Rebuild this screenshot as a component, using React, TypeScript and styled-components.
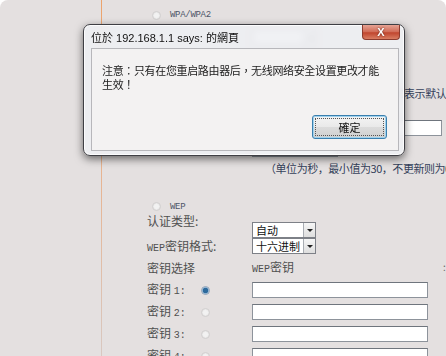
import React from 'react';
import styled, { createGlobalStyle } from 'styled-components';

const GlobalStyle = createGlobalStyle`
  body {
    margin: 0;
    background: #ffffff;
  }
`;

const Screen = styled.div`
  position: relative;
  width: 446px;
  height: 356px;
  overflow: hidden;
  display: flex;
  background: #e4e0e0;
  border-radius: 8px 8px 0 0;
  font-family: 'Noto Sans CJK SC', sans-serif;
`;

const Sidebar = styled.div`
  width: 101px;
  flex-shrink: 0;
`;

const Divider = styled.div`
  width: 1px;
  flex-shrink: 0;
  background: linear-gradient(#eca36c, #e6b696 55%, #d8c8c1);
`;

const Main = styled.div`
  flex: 1;
  display: flex;
  flex-direction: column;
  padding: 4px 0 0 45px;
  white-space: nowrap;
`;

const Row = styled.div<{ h: number; mt?: number }>`
  flex-shrink: 0;
  display: grid;
  grid-template-columns: 105px 1fr;
  align-items: center;
  height: ${(p) => p.h}px;
  margin-top: ${(p) => p.mt || 0}px;
`;

const KeyRow = styled.div`
  flex-shrink: 0;
  display: grid;
  grid-template-columns: 54px 51px 1fr;
  align-items: center;
  height: 22px;
`;

const OptionRow = styled.div<{ h: number; mt?: number }>`
  flex-shrink: 0;
  display: flex;
  align-items: center;
  gap: 9px;
  padding-left: 5px;
  height: ${(p) => p.h}px;
  margin-top: ${(p) => p.mt || 0}px;
`;

const Label = styled.span<{ self?: string }>`
  font-size: 12px;
  line-height: 14px;
  color: #505050;
  align-self: ${(p) => p.self || 'center'};
`;

const Latin = styled.span`
  font-family: 'Liberation Mono', monospace;
  font-size: 10px;
`;

const OptionText = styled.span`
  font-family: 'Liberation Mono', monospace;
  font-size: 9px;
  color: #4e5668;
  letter-spacing: -0.3px;
`;

const Radio = styled.span<{ checked?: boolean }>`
  width: 9px;
  height: 9px;
  border-radius: 50%;
  box-sizing: border-box;
  border: 1px solid ${(p) => (p.checked ? '#8fa2b8' : '#d2d0d0')};
  background: ${(p) =>
    p.checked
      ? 'radial-gradient(circle, #2d6a9c 0 2.5px, #8bb2d4 3px, #eef2f6 4px)'
      : 'radial-gradient(circle, #f2f2f2 0 2px, #e2e0e0 4px)'};
  display: inline-block;
`;

const Select = styled.div<{ self?: string }>`
  display: flex;
  align-items: center;
  width: 64px;
  height: 16px;
  box-sizing: border-box;
  border: 1px solid #7d8087;
  background: #ffffff;
  align-self: ${(p) => p.self || 'center'};
`;

const SelectValue = styled.span`
  flex: 1;
  padding-left: 3px;
  font-size: 11px;
  line-height: 14px;
  color: #111;
  border-right: 1px solid #a9adb3;
  height: 100%;
`;

const SelectArrow = styled.span`
  width: 11px;
  height: 100%;
  display: flex;
  align-items: center;
  justify-content: center;
  background: linear-gradient(#f6f6f6, #dedede);
  &::after {
    content: '';
    border-left: 3px solid transparent;
    border-right: 3px solid transparent;
    border-top: 3px solid #222;
  }
`;

const Input = styled.div<{ w: number; self?: string }>`
  width: ${(p) => p.w}px;
  height: 16px;
  box-sizing: border-box;
  border: 1px solid #8d939b;
  border-top-color: #6f757d;
  background: #ffffff;
  align-self: ${(p) => p.self || 'center'};
`;

const Field = styled.div`
  display: flex;
  align-items: center;
  gap: 4px;
`;

const Hint = styled.span<{ pl?: number }>`
  font-size: 11px;
  letter-spacing: -0.45px;
  color: #34415a;
  padding-left: ${(p) => p.pl || 0}px;
`;

const Colon = styled.span`
  position: absolute;
  left: 443px;
  top: 259px;
  font-size: 10px;
  color: #666;
`;

/* ---- alert dialog ---- */

const Dialog = styled.div`
  position: absolute;
  left: 83px;
  top: 24px;
  width: 322px;
  height: 132px;
  box-sizing: border-box;
  display: flex;
  flex-direction: column;
  border: 1px solid #3f3f44;
  border-radius: 7px;
  background: rgba(238, 239, 243, 0.88);
  backdrop-filter: blur(3px);
  box-shadow: 0 3px 9px rgba(0, 0, 0, 0.55), inset 0 0 0 1px rgba(255, 255, 255, 0.85);
`;

const TitleBar = styled.div`
  position: relative;
  height: 23px;
  display: flex;
  align-items: center;
  padding-left: 7px;
  font-family: 'Liberation Sans', 'Noto Sans CJK TC', sans-serif;
  font-size: 11px;
  color: #111;
`;

const CloseButton = styled.div`
  position: absolute;
  right: 4px;
  top: 0;
  width: 38px;
  height: 15px;
  box-sizing: border-box;
  border: 1px solid #8c3b2e;
  border-top: none;
  border-radius: 0 0 4px 4px;
  background: linear-gradient(#e6a394, #d06a55 50%, #c0452e 55%, #d97d62);
  display: flex;
  align-items: center;
  justify-content: center;
  color: #fff;
  font-family: 'Liberation Sans', sans-serif;
  font-weight: bold;
  font-size: 11px;
  text-shadow: 0 0 2px #5a1a10;
`;

const Panel = styled.div`
  flex: 1;
  margin: 0 5px 4px 7px;
  box-sizing: border-box;
  display: flex;
  flex-direction: column;
  padding: 14px 11px 11px 10px;
  background: #f3f2f2;
  border: 1px solid #b7b7bb;
`;

const Message = styled.p`
  margin: 0;
  font-family: 'Noto Sans CJK TC', sans-serif;
  font-size: 11px;
  letter-spacing: -0.35px;
  line-height: 14px;
  color: #1b1b1b;
`;

const ButtonBar = styled.div`
  margin-top: auto;
  display: flex;
  justify-content: flex-end;
`;

const OkButton = styled.div`
  width: 75px;
  height: 24px;
  box-sizing: border-box;
  border: 1px solid #3a7fae;
  border-radius: 3px;
  background: linear-gradient(#f4f4f4, #e9e9e9 50%, #dcdcdc 51%, #cfcfcf);
  box-shadow: inset 0 0 0 1px #9fd2ee;
  display: flex;
  align-items: center;
  justify-content: center;
  font-family: 'Noto Sans CJK TC', sans-serif;
  font-size: 11px;
  color: #111;
  outline: 1px dotted #555;
  outline-offset: -4px;
`;

const App = () => {
  return (
    <>
      <GlobalStyle />
      <Screen>
        <Sidebar />
        <Divider />
        <Main>
          <OptionRow h={22}>
            <Radio />
            <OptionText>WPA/WPA2</OptionText>
          </OptionRow>
          {/* rows below lie under the alert */}
          <Row h={22}>
            <span />
            <Select>
              <SelectValue />
              <SelectArrow />
            </Select>
          </Row>
          <Row h={22}>
            <span />
            <Select>
              <SelectValue />
              <SelectArrow />
            </Select>
          </Row>
          <Row h={46}>
            <span />
            <Field>
              <Input w={84} />
              <Hint>（1-65535，0表示默认端口：1812）</Hint>
            </Field>
          </Row>
          <Row h={24}>
            <span />
            <Input w={190} />
          </Row>
          <Row h={17}>
            <span />
            <Input w={86} />
          </Row>
          <Row h={22}>
            <span />
            <Hint pl={13}>（单位为秒，最小值为30，不更新则为0）</Hint>
          </Row>

          <OptionRow h={15} mt={20}>
            <Radio />
            <OptionText>WEP</OptionText>
          </OptionRow>
          <Row h={24}>
            <Label self="start">认证类型:</Label>
            <Select self="end">
              <SelectValue>自动</SelectValue>
              <SelectArrow />
            </Select>
          </Row>
          <Row h={19}>
            <Label>
              <Latin>WEP</Latin>密钥格式:
            </Label>
            <Select self="start">
              <SelectValue>十六进制</SelectValue>
              <SelectArrow />
            </Select>
          </Row>
          <Row h={22}>
            <Label>密钥选择</Label>
            <Label>
              <Latin>WEP</Latin>密钥
            </Label>
          </Row>
          {[1, 2, 3, 4].map((n) => (
            <KeyRow key={n}>
              <Label>
                密钥 <Latin>{n}:</Latin>
              </Label>
              <Radio checked={n === 1} />
              <Input w={176} />
            </KeyRow>
          ))}
        </Main>
        <Colon>:</Colon>

        <Dialog>
          <TitleBar>
            位於 192.168.1.1 says: 的網頁
            <CloseButton>X</CloseButton>
          </TitleBar>
          <Panel>
            <Message>
              注意：只有在您重启路由器后，无线网络安全设置更改才能
              <br />
              生效！
            </Message>
            <ButtonBar>
              <OkButton>確定</OkButton>
            </ButtonBar>
          </Panel>
        </Dialog>
      </Screen>
    </>
  );
};

export default App;
